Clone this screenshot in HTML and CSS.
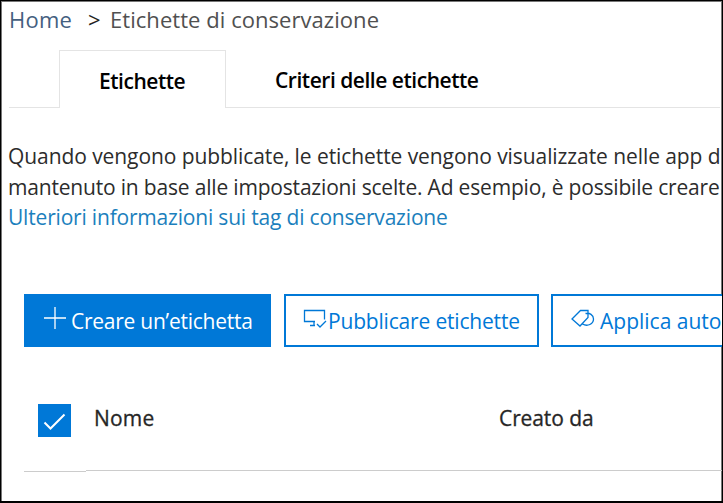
FILE: index.html
```html
<!DOCTYPE html>
<html lang="it">
<head>
<meta charset="utf-8">
<title>Etichette di conservazione</title>
<link rel="stylesheet" href="styles.css">
</head>
<body>
<main class="page">
  <nav class="breadcrumb"><a class="home">Home</a><span class="sep">&gt;</span><span class="current">Etichette di conservazione</span></nav>
  <div class="tabs">
    <div class="tab active"><span>Etichette</span></div>
    <div class="tab other"><span>Criteri delle etichette</span></div>
  </div>
  <section class="intro">
    <p class="line1">Quando vengono pubblicate, le etichette vengono visualizzate nelle app d</p>
    <p class="line2">mantenuto in base alle impostazioni scelte. Ad esempio, è possibile creare</p>
    <p class="more"><a>Ulteriori informazioni sui tag di conservazione</a></p>
  </section>
  <div class="actions">
    <button class="btn primary"><svg class="plus" width="24" height="24" viewBox="0 0 24 24"><path d="M12 1v22M1 12h22"/></svg><span class="create">Creare un’etichetta</span></button>
    <button class="btn publish"><svg class="screen" width="24" height="20" viewBox="0 0 24 20"><path d="M12 12.500H1.500V1.500h20v9M11 12.500v4M7 16.500h5M14 15l3 3 6-6"/></svg><span class="pub">Pubblicare etichette</span></button>
    <button class="btn apply"><svg class="tags" width="24" height="20" viewBox="0 0 24 20"><path d="M9.500 1.500h7.500v7L9 17 1 10zM14.500 4.500c4-1 8 1.500 8 5.500 0 5-6 8-11 5"/></svg><span class="app">Applica auto</span></button>
  </div>
  <div class="thead">
    <div class="cell check"><span class="box"><svg width="33" height="33" viewBox="0 0 33 33"><path d="M6.500 18.500l6 6 14-14"/></svg></span></div>
    <div class="cell name"><span>Nome</span></div>
    <div class="cell author"><span>Creato da</span></div>
  </div>
</main>
</body>
</html>
```
FILE: styles.css
```css
* { box-sizing: border-box; }
body { margin: 0; font-family: "Open Sans", "Noto Sans", sans-serif; background: #fff; }
p { margin: 0; }
.page { width: 723px; height: 503px; border: 1px solid #000; border-bottom-width: 2px; overflow: hidden; box-shadow: inset 1px 1px #777, inset -1px 0 #777; white-space: nowrap; }
.breadcrumb { display: flex; height: 49px; padding: 3px 0 0 8px; font-size: 22px; line-height: 31px; color: #505050; }
.home { width: 79px; color: #44607f; letter-spacing: 0.250px; }
.sep { width: 22px; color: #222; }
.current { letter-spacing: 0.050px; }
.tabs { display: flex; height: 58px; margin: 0 2px 0 8px; color: #000; font-size: 21px; font-weight: 600; line-height: 30px; letter-spacing: -0.470px; }
.tabs::before { content: ""; width: 50px; border-bottom: 1px solid #e4e4e4; }
.tab.active { width: 167px; padding: 15px 0 0 39px; border: 1px solid #e4e4e4; border-bottom: 0; }
.tab.other { flex: 1; padding: 15px 0 0 49px; border-bottom: 1px solid #e4e4e4; }
.intro { margin-top: 33px; padding-left: 7px; height: 153px; font-size: 21px; line-height: 30.500px; color: #2c2c2c; }
.line1 { letter-spacing: -0.080px; }
.line2 { letter-spacing: -0.185px; }
.more { color: #1b7fbd; letter-spacing: -0.190px; }
.actions { display: flex; margin-left: 23px; height: 53px; }
.btn { display: flex; flex: none; align-items: flex-start; height: 53px; padding: 0; border: 2px solid #0078d7; background: #fff; color: #0078d7; font: 21px/30px "Open Sans", "Noto Sans", sans-serif; white-space: nowrap; }
.btn span { margin-top: 10px; }
.btn .create { letter-spacing: -0.250px; }
.btn .pub { letter-spacing: -0.180px; }
.btn svg, .box svg { flex: none; fill: none; stroke: currentColor; stroke-width: 1.300; }
.primary { width: 247px; margin-right: 13px; background: #0078d7; color: #fff; }
.publish { width: 255px; margin-right: 12px; }
.apply { width: 255px; }
.plus { margin: 10px 4px 0 17px; }
.screen { margin: 13px 1px 0 17px; }
.tags { margin: 13px 5px 0 18px; }
.thead { display: flex; margin: 57px 0 0 23px; height: 68px; font-size: 21px; line-height: 30px; color: #262626; -webkit-text-stroke: 0.300px #262626; }
.cell { height: 67px; border-bottom: 1px solid #ccc; }
.check { width: 62px; height: 68px; padding-left: 14px; }
.box { display: block; width: 33px; height: 33px; background: #0078d7; color: #fff; }
.box svg { display: block; stroke-width: 2; }
.name { width: 405px; padding-left: 8px; letter-spacing: 0.200px; }
.author { flex: 1; padding-left: 8px; letter-spacing: -0.100px; }
.name span, .author span { display: block; margin-top: -1px; }
```
